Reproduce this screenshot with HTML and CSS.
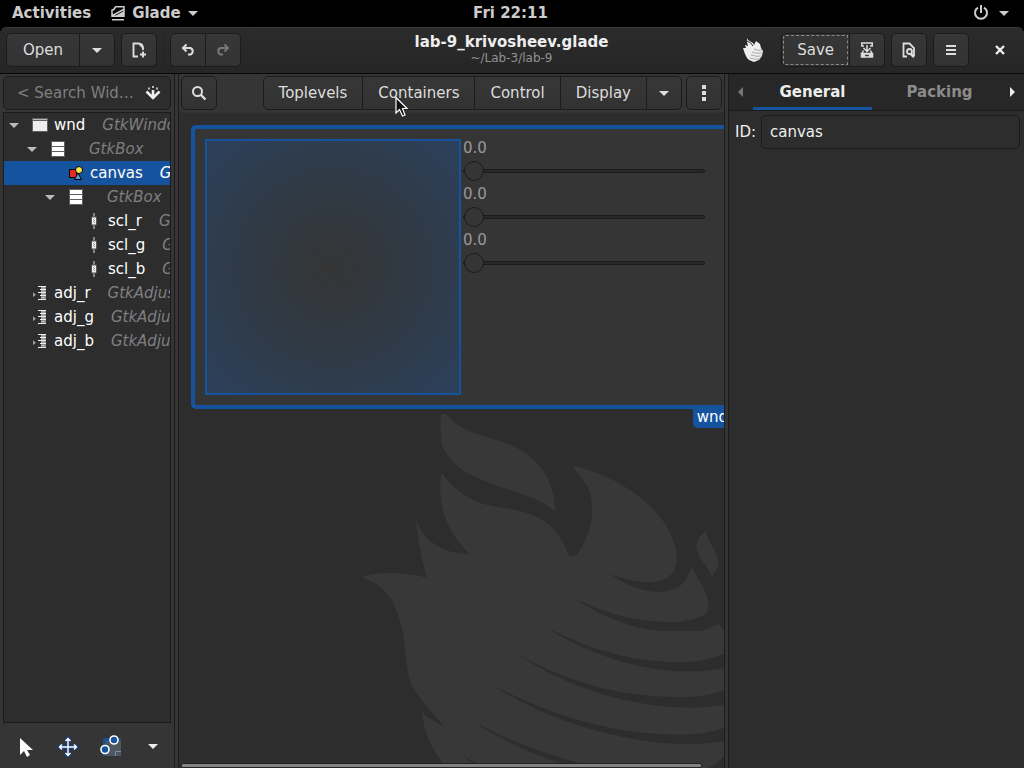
FILE: index.html
```html
<!DOCTYPE html>
<html lang="en">
<head>
<meta charset="utf-8">
<title>lab-9_krivosheev.glade</title>
<link rel="stylesheet" href="styles.css">
</head>
<body>
<svg class="defs" aria-hidden="true">
  <symbol id="caret" viewBox="0 0 10 5"><path d="M0 0H10L5 5Z" fill="currentColor"/></symbol>
  <symbol id="box" viewBox="0 0 16 16"><path d="M1 0H15V16H1Z" fill="#606060"/><path d="M2 1H14V5H2ZM2 6H14V10H2ZM2 11H14V15H2Z" fill="#fff"/></symbol>
  <symbol id="scale" viewBox="0 0 16 16"><path d="M7 0H9V16H7Z" fill="#858585"/><path d="M5.500 4H10.500V12H5.500Z" fill="#eee" stroke="#555"/><path d="M7 6h1v1H7zM8 7h1v1H8zM7 8h1v1H7zM8 9h1v1H8z" fill="#999"/></symbol>
  <symbol id="adj" viewBox="0 0 16 16"><path d="M1 7L4 10L1 12Z" fill="#999"/><path d="M9 1H14V15H9Z" fill="#888"/><path d="M6 1H14V2H6ZM8 4H14V5H8ZM6 7H14V8H6ZM8 10H14V11H8ZM6 14H14V15H6Z" fill="#eee"/><path d="M9 3H13M9 6H13M9 9H13M9 12.500H13" stroke="#bbb"/></symbol>
</svg>

<header class="topbar">
  <div class="topbar-left">
    <span>Activities</span>
    <span class="app">
      <svg width="14" height="15" viewBox="0 0 14 15"><path d="M4 .8H13V10.200H1V4Q4 4 4 .8M1.500 9.500L12.500 3.500M1 13.800H13" fill="none" stroke="#ccc" stroke-width="1.500"/><path d="M4 10L13 5V10Z" fill="#ccc"/></svg>
      Glade
      <svg width="10" height="5"><use href="#caret"/></svg>
    </span>
  </div>
  <span>Fri 22:11</span>
  <div class="topbar-right">
    <svg width="16" height="16" viewBox="0 0 16 16" fill="none" stroke="#ccc" stroke-width="2"><path d="M5 2.600A6 6 0 1 0 11 2.600M8 0V8"/></svg>
    <svg width="10" height="5"><use href="#caret"/></svg>
  </div>
</header>

<div class="window">
<header class="headerbar">
  <div class="head-left">
    <div class="linked">
      <button class="btn open">Open</button>
      <button class="btn icon" aria-label="Recent files"><svg width="10" height="5"><use href="#caret"/></svg></button>
    </div>
    <button class="btn icon" aria-label="New"><svg width="16" height="16" viewBox="0 0 16 16" fill="none" stroke="#ddd" stroke-width="1.700"><path d="M7 14.500H2.500V1.500H8L12 5.500V8M7.500 1.500C11 1.500 12 4 12 7M12 9.500V15.500M9 12.500H15" stroke-width="1.900"/></svg></button>
    <span class="divider"></span>
    <div class="linked">
      <button class="btn icon" aria-label="Undo"><svg width="16" height="16" viewBox="0 0 16 16" fill="none" stroke="#ddd" stroke-width="2"><path d="M6.500 2.500L3 6L6.500 9.500M3 6H10.500A3.500 3.500 0 0 1 10.500 12.500H8"/></svg></button>
      <button class="btn icon" aria-label="Redo" disabled><svg width="16" height="16" viewBox="0 0 16 16" fill="none" stroke="#777" stroke-width="2"><path d="M9.500 2.500L13 6L9.500 9.500M13 6H5.500A3.500 3.500 0 0 0 5.500 12.500H8"/></svg></button>
    </div>
  </div>
  <div class="title"><h1>lab-9_krivosheev.glade</h1><p>~/Lab-3/lab-9</p></div>
  <div class="head-right">
    <svg class="logo" width="20" height="24" viewBox="0 0 20 24"><path d="M4 0L5 2L10 5L11 7L13 3L17 6L18 10L20 13L19 18L16 22L11 24L6 22L4 20L2 16L0 10L3 10L2 7L5 8L4 4Z" fill="#eee"/><path d="M11 11Q15 13 19 12M9 14Q14 16 19 15M8 17Q13 19 19 18M7 20Q12 22 17 21" fill="none" stroke="#999" stroke-width=".8"/><path d="M4 3Q8 4 10 8" fill="none" stroke="#2d2d2d"/></svg>
    <div class="linked">
      <button class="btn save">Save</button>
      <button class="btn icon" aria-label="Save as"><svg width="16" height="16" viewBox="0 0 16 16" fill="none" stroke="#ddd" stroke-width="1.500"><path d="M5 4H2.800V1H13.200V4H11M8 3V9M4.500 6L8 9.500L11.500 6M4.500 8.500L3 11.500M11.500 8.500L13 11.500M2.500 11.500H13.500V15H2.500Z"/><path d="M3 11H13V15H3Z" fill="#ddd" stroke="none"/><path d="M6 13.500H10" stroke="#444"/></svg></button>
    </div>
    <button class="btn icon" aria-label="Preview"><svg width="16" height="16" viewBox="0 0 16 16" fill="none" stroke="#ddd" stroke-width="1.800"><path d="M6 14.500H2.500V1.500H8.500L13 6V14"/><circle cx="8.500" cy="9.500" r="2.500"/><path d="M9.500 11.500L13 15" stroke-width="2.600"/></svg></button>
    <button class="btn icon" aria-label="Menu"><svg width="16" height="16" viewBox="0 0 16 16"><path d="M3 3H13V5H3ZM3 7H13V9H3ZM3 11H13V13H3Z" fill="#ddd"/></svg></button>
    <button class="close" aria-label="Close"><svg width="16" height="16" viewBox="0 0 16 16"><path d="M4 4L12 12M12 4L4 12" stroke="#eee" stroke-width="2.400"/></svg></button>
  </div>
</header>

<main class="panes">
  <aside class="inspector">
    <div class="search">
      <input type="text" aria-label="Search widgets" placeholder="&lt; Search Wid…">
      <svg width="16" height="16" viewBox="0 0 16 16"><path d="M1.500 6.500L8 13L14.500 6.500M8 12V5" fill="none" stroke="#eee" stroke-width="2.600"/><path d="M7 1H9V3H7ZM3 2.500H5V4.500H3ZM11 2.500H13V4.500H11Z" fill="#bbb"/></svg>
    </div>
    <ul class="tree">
      <li class="l0"><span class="arrow"><svg width="10" height="5"><use href="#caret"/></svg></span><svg width="16" height="16" viewBox="0 0 16 16"><path d="M0 1H16V15H0Z" fill="#606060"/><path d="M1 4H15V14H1Z" fill="#eee"/><path d="M1 2H15V3H1Z" fill="#bbb"/></svg><b>wnd</b><i>GtkWindow</i></li>
      <li class="l1"><span class="arrow"><svg width="10" height="5"><use href="#caret"/></svg></span><svg width="16" height="16"><use href="#box"/></svg><b></b><i>GtkBox</i></li>
      <li class="l2 selected"><span class="arrow"></span><svg width="16" height="16" viewBox="0 0 16 16" stroke="#000"><path d="M1.500 4.500H8.500V12.500H1.500Z" fill="#ed2626"/><path d="M6.500 14.500L10 8L13.500 14.500Z" fill="#6b9bd1"/><circle cx="11" cy="5" r="3.500" fill="#fce94f"/></svg><b>canvas</b><i>GtkDrawingArea</i></li>
      <li class="l2"><span class="arrow"><svg width="10" height="5"><use href="#caret"/></svg></span><svg width="16" height="16"><use href="#box"/></svg><b></b><i>GtkBox</i></li>
      <li class="l3"><span class="arrow"></span><svg width="16" height="16"><use href="#scale"/></svg><b>scl_r</b><i>GtkScale</i></li>
      <li class="l3"><span class="arrow"></span><svg width="16" height="16"><use href="#scale"/></svg><b>scl_g</b><i>GtkScale</i></li>
      <li class="l3"><span class="arrow"></span><svg width="16" height="16"><use href="#scale"/></svg><b>scl_b</b><i>GtkScale</i></li>
      <li class="l0"><span class="arrow"></span><svg width="16" height="16"><use href="#adj"/></svg><b>adj_r</b><i>GtkAdjustment</i></li>
      <li class="l0"><span class="arrow"></span><svg width="16" height="16"><use href="#adj"/></svg><b>adj_g</b><i>GtkAdjustment</i></li>
      <li class="l0"><span class="arrow"></span><svg width="16" height="16"><use href="#adj"/></svg><b>adj_b</b><i>GtkAdjustment</i></li>
    </ul>
    <div class="tools">
      <button aria-label="Select"><svg width="24" height="24" viewBox="0 0 24 24"><path d="M6 3V20L10 16L13 22L16 20L13 15H19Z" fill="#fff"/></svg></button>
      <button aria-label="Drag and resize"><svg width="24" height="24" viewBox="0 0 24 24" fill="none"><g stroke="#183c78" stroke-width="4"><path d="M12 4V20M4 12H20M9.500 6L12 3.500L14.500 6M9.500 18L12 20.500L14.500 18M6 9.500L3.500 12L6 14.500M18 9.500L20.500 12L18 14.500"/></g><path d="M12 4V20M4 12H20M9.500 6L12 3.500L14.500 6M9.500 18L12 20.500L14.500 18M6 9.500L3.500 12L6 14.500M18 9.500L20.500 12L18 14.500" stroke="#fff" stroke-width="1.400"/></svg></button>
      <button aria-label="Edit margins"><svg width="24" height="24" viewBox="0 0 24 24"><path d="M4 4H22V21H4Z" fill="#50575f"/><path d="M5.500 21V4.500H22" fill="none" stroke="#15539e" stroke-width="2.500"/><path d="M16.500 21V16.500H22" fill="#40566f" stroke="#7890aa"/><g fill="#15539e" stroke="#fff" stroke-width="1.600"><circle cx="15" cy="5" r="4"/><circle cx="6" cy="14.500" r="4"/></g></svg></button>
      <button aria-label="More tools"><svg width="10" height="5"><use href="#caret"/></svg></button>
    </div>
  </aside>

  <section class="workspace">
    <div class="palette">
      <button class="btn icon" aria-label="Search"><svg width="16" height="16" viewBox="0 0 16 16" fill="none" stroke="#ddd"><circle cx="6.500" cy="6.500" r="4.500" stroke-width="2"/><path d="M10 10L14.500 14.500" stroke-width="2.400"/></svg></button>
      <div class="linked classes">
        <button class="btn">Toplevels</button>
        <button class="btn">Containers</button>
        <button class="btn">Control</button>
        <button class="btn">Display</button>
        <button class="btn icon" aria-label="More classes"><svg width="10" height="5"><use href="#caret"/></svg></button>
      </div>
      <button class="btn icon" aria-label="Options"><svg width="16" height="16" viewBox="0 0 16 16"><path d="M6 0H10V4H6ZM6 6H10V10H6ZM6 12H10V16H6Z" fill="#ddd"/></svg></button>
    </div>
    <div class="design">
      <svg class="watermark" width="390" height="378" viewBox="0 0 1170 1134" fill="#383838">
        <path d="M303 71Q317 70 330 84C380 140 480 140 550 185C620 230 645 300 645 365C590 312 510 310 400 258C345 234 318 195 306 165Q298 118 303 71Z"/>
        <path d="M306 249C332 287 360 308 400 330C450 356 510 350 570 372C625 394 652 420 675 470C685 495 690 500 702 498C714 496 720 480 735 452C757 405 756 390 756 350C756 295 730 270 696 227C780 243 890 295 955 375C1000 430 1012 480 1010 515C1004 560 975 577 915 576C870 573 840 563 810 552C860 588 915 608 970 605C1020 600 1040 575 1055 527C1072 570 1103 600 1105 640V660C1100 680 1055 689 1020 696C900 698 820 680 702 625C790 685 900 723 970 723H1080C1105 718 1120 709 1137 702L1170 750V785C1100 812 1070 815 1020 816C880 815 760 784 609 707C740 790 890 843 1040 844C1100 844 1130 839 1170 830V897C1110 915 1080 921 1020 921C860 920 710 890 530 791C680 893 870 953 1060 953Q1120 951 1170 940V1008C1120 1026 1080 1034 1020 1034C830 1034 650 985 461 887C610 986 840 1063 1060 1063Q1120 1060 1170 1050V1080C1140 1110 1135 1120 1105 1134H785C660 1108 530 1064 404 997C500 1063 610 1102 700 1134H436L360 1092L420 1134H320C275 1080 252 1030 246 967C265 985 290 996 316 1013C280 970 220 910 209 870C195 810 198 760 181 695C160 620 130 585 64 561C110 545 190 544 260 563C240 490 234 440 225 375C242 450 310 493 389 492C335 440 305 380 301 310Q299 260 306 249Z"/>
        <path d="M1098 424C1104 460 1140 490 1134 525Q1130 543 1116 560C1100 520 1068 500 1069 465Q1072 440 1098 424Z"/>
      </svg>
      <div class="preview">
        <div class="drawing"></div>
        <div class="scales">
          <label>0.0<input type="range" min="0" max="255" value="0"></label>
          <label>0.0<input type="range" min="0" max="255" value="0"></label>
          <label>0.0<input type="range" min="0" max="255" value="0"></label>
        </div>
        <span class="tag">wnd</span>
      </div>
      <div class="scrollbar"></div>
    </div>
    <svg class="pointer" width="14" height="22" viewBox="0 0 14 22"><path d="M1 1.500V17L4.500 13.500L7.500 20L10 19L7.500 12.500H12Z" fill="#111" stroke="#fff" stroke-width="1.200"/></svg>
  </section>

  <aside class="properties">
    <nav class="tabs">
      <button class="scroll off" aria-label="Previous tab"><svg width="5" height="10" viewBox="0 0 5 10"><path d="M5 0V10L0 5Z" fill="currentColor"/></svg></button>
      <button class="tab active">General</button>
      <button class="tab">Packing</button>
      <button class="scroll" aria-label="Next tab"><svg width="5" height="10" viewBox="0 0 5 10"><path d="M0 0V10L5 5Z" fill="currentColor"/></svg></button>
    </nav>
    <div class="field">
      <label for="wid">ID:</label>
      <input id="wid" type="text" value="canvas">
    </div>
  </aside>
</main>
</div>
</body>
</html>
```
FILE: styles.css
```css
* { box-sizing: border-box; }
body {
  margin: 0;
  height: 100vh;
  display: flex;
  flex-direction: column;
  overflow: hidden;
  background: #000;
  color: #eee;
  font: 15px/18px "DejaVu Sans", sans-serif;
}
button, input { font: inherit; color: inherit; margin: 0; }
button { padding: 0; border: 0; background: none; display: flex; align-items: center; justify-content: center; }
svg { display: block; flex: none; }
.defs { position: absolute; width: 0; height: 0; }

.topbar {
  height: 27px;
  padding: 0 15px 1px 12px;
  display: grid;
  grid-template-columns: 1fr auto 1fr;
  align-items: center;
  color: #ccc;
  font-weight: bold;
}
.topbar-left, .topbar-right, .app { display: flex; align-items: center; }
.topbar-left { gap: 20px; }
.app { gap: 7px; }
.topbar-right { justify-content: flex-end; gap: 10px; }

.window { flex: 1; min-height: 0; display: flex; flex-direction: column; background: #353535; border-radius: 7px 7px 0 0; overflow: hidden; }
.headerbar {
  height: 47px;
  padding: 0 7px 1px 6px;
  display: grid;
  grid-template-columns: 1fr auto 1fr;
  align-items: center;
  background: linear-gradient(#2b2b2b, #262626);
  border-top: 1px solid #383838;
  border-bottom: 1px solid #070707;
}
.head-left, .head-right { display: flex; align-items: center; gap: 6px; }
.head-right { justify-content: flex-end; }
.logo { margin-right: 12px; }
.divider { width: 1px; height: 32px; background: #222; }
.linked { display: flex; }
.btn {
  height: 34px;
  padding: 0 15px;
  border: 1px solid #1b1b1b;
  border-radius: 5px;
  background: linear-gradient(#373737, #323232);
  color: #ddd;
}
.btn.icon { width: 36px; padding: 0; }
.linked .btn:not(:first-child) { border-left: 0; border-top-left-radius: 0; border-bottom-left-radius: 0; }
.linked .btn:not(:last-child) { border-top-right-radius: 0; border-bottom-right-radius: 0; }
.linked .btn.icon:not(:first-child) { width: 35px; }
.save { outline: 1px dashed #888; outline-offset: -3px; }
.btn.open { padding: 0 16px; }
.close { width: 34px; height: 34px; margin: 0 0 0 8px; }
.title { text-align: center; }
.title h1 { margin: 0; font-size: 15px; line-height: 17px; }
.title p { margin: 0; font-size: 12px; line-height: 15px; color: #919191; }

.panes { flex: 1; min-height: 0; display: flex; }
.inspector {
  width: 175px;
  padding: 2px 3px 0;
  display: flex;
  flex-direction: column;
  gap: 2px;
  border-right: 1px solid #1b1b1b;
}
.search {
  height: 34px;
  padding: 0 9px 0 13px;
  display: flex;
  align-items: center;
  border: 1px solid #1b1b1b;
  border-radius: 5px;
  background: #2d2d2d;
}
.search input { flex: 1; min-width: 0; padding: 0; border: 0; background: none; outline: 0; }
.search input::placeholder { color: #7f7f7f; opacity: 1; }
.tree {
  flex: 1;
  min-height: 0;
  margin: 0;
  padding: 0;
  list-style: none;
  overflow: hidden;
  border: 1px solid #1b1b1b;
  background: #2d2d2d;
}
.tree li { height: 24px; padding-left: 4px; display: flex; align-items: center; white-space: nowrap; }
.tree .l1 { padding-left: 22px; }
.tree .l2 { padding-left: 40px; }
.tree .l3 { padding-left: 58px; }
.tree b { margin-left: 6px; font-weight: normal; color: #fff; }
.tree i { margin-left: 17px; color: #7f7f7f; }
.tree .selected { background: #15539e; }
.tree .selected i { color: #fff; }
.arrow { flex: none; width: 12px; margin-right: 12px; display: flex; justify-content: center; color: #bbb; }
.tools { height: 43px; padding: 0 6px 0 11px; display: flex; align-items: center; justify-content: space-between; }
.tools button { min-width: 24px; height: 34px; }

.workspace {
  position: relative;
  flex: 1;
  min-width: 0;
  margin-left: 3px;
  display: flex;
  flex-direction: column;
  border-left: 1px solid #1b1b1b;
  border-right: 1px solid #1b1b1b;
}
.palette { height: 38px; padding: 0 2px; display: flex; align-items: center; gap: 4px; }
.classes { margin-left: auto; }
.design { position: relative; flex: 1; min-height: 0; padding: 12px 0 0 12px; overflow: hidden; background: #2d2d2d; border-top: 1px solid #323232; }
.watermark { position: absolute; right: -6px; bottom: 0; }
.preview {
  position: relative;
  height: 284px;
  padding: 10px 19px 10px 10px;
  display: flex;
  gap: 2px;
  border: 4px solid #15539e;
  border-right: 0;
  border-radius: 5px 0 0 5px;
  background: #353535;
}
.drawing { width: 256px; height: 256px; flex: none; border: 2px solid #15539e; background: radial-gradient(circle farthest-corner, #353535, #2f3a46 50%, #2c405c); }
.scales { flex: 1; min-width: 0; }
.scales label { display: block; height: 46px; color: #999; }
.scales input { display: block; width: 100%; height: 28px; appearance: none; background: none; }
.scales input::-webkit-slider-runnable-track { height: 4px; border: 1px solid #1b1b1b; border-radius: 3px; background: #282828; }
.scales input::-webkit-slider-thumb { appearance: none; width: 20px; height: 20px; margin-top: -9px; border: 1px solid #1b1b1b; border-radius: 50%; background: #353535; }
.tag { position: absolute; top: 100%; right: -8px; padding: 3px 4px 2px; border-radius: 0 0 5px 5px; background: #15539e; color: #fff; }
.scrollbar { position: absolute; left: 2px; right: 22px; bottom: 0; height: 5px; border: 1px solid #222; border-radius: 2px; background: #828282; }
.pointer { position: absolute; left: 216px; top: 22px; }

.properties { width: 296px; margin-left: 3px; display: flex; flex-direction: column; border-left: 1px solid #1b1b1b; background: #2d2d2d; }
.tabs { height: 37px; padding: 0 7px 0 6px; display: flex; gap: 8px; background: #272727; border-bottom: 1px solid #1b1b1b; }
.tab { flex: 1; font-weight: bold; color: #8b8b8b; border-bottom: 3px solid transparent; border-top: 3px solid transparent; }
.tab.active { color: #eee; border-bottom-color: #15539e; }
.scroll { width: 10px; }
.scroll.off { color: #777; }
.field { padding: 4px 4px 0 6px; display: flex; align-items: center; gap: 5px; }
.field input { flex: 1; min-width: 0; height: 34px; padding: 0 8px; border: 1px solid #1b1b1b; border-radius: 5px; background: #2d2d2d; }
```
